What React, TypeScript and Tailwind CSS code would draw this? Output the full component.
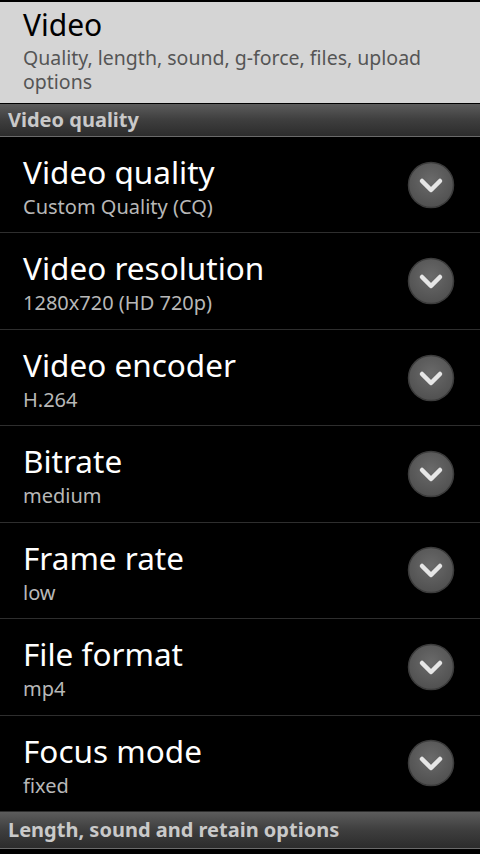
import React from "react";

const rows = [
  { title: "Video quality", value: "Custom Quality (CQ)" },
  { title: "Video resolution", value: "1280x720 (HD 720p)" },
  { title: "Video encoder", value: "H.264" },
  { title: "Bitrate", value: "medium" },
  { title: "Frame rate", value: "low" },
  { title: "File format", value: "mp4" },
  { title: "Focus mode", value: "fixed" },
];

function DropIcon() {
  return (
    <svg width="48" height="48" viewBox="0 0 48 48" className="shrink-0">
      <defs>
        <radialGradient id="g" cx="50%" cy="40%" r="60%">
          <stop offset="0%" stopColor="#6a6a6a" />
          <stop offset="100%" stopColor="#505050" />
        </radialGradient>
      </defs>
      <circle cx="24" cy="24" r="22.5" fill="url(#g)" stroke="#3c3c3c" strokeWidth="1.5" />
      <path d="M15 20 L24 29 L33 20" fill="none" stroke="#e6e6e6" strokeWidth="4.5" strokeLinecap="round" strokeLinejoin="round" />
    </svg>
  );
}

function SectionHeader({ label, h }: { label: string; h: string }) {
  return (
    <div
      className={`${h} flex items-center px-[8px] bg-gradient-to-b from-[#5c5c5c] via-[#3e3e3e] to-[#2c2c2c] border-b border-[#6a6a6a]`}
    >
      <span className="text-[20px] font-bold text-[#c9c9c9] leading-none">{label}</span>
    </div>
  );
}

export default function App() {
  return (
    <div
      className="w-[480px] h-[854px] bg-black overflow-hidden"
      style={{ fontFamily: '"Noto Sans", "Open Sans", sans-serif' }}
    >
      <div className="h-[2px]" />
      <div className="h-[101px] bg-[#d5d5d5] pl-[23px] pt-[2px]">
        <div className="text-[30px] leading-[42px] text-black">Video</div>
        <div className="text-[19.5px] leading-[24px] text-[#555555]">
          Quality, length, sound, g-force, files, upload options
        </div>
      </div>
      <div className="h-[1px]" />
      <SectionHeader label="Video quality" h="h-[33px]" />
      {rows.map((r) => (
        <div
          key={r.title}
          className="h-[96.43px] box-border border-b border-[#2e2e2e] flex items-center pl-[23px] pr-[25px]"
        >
          <div className="flex-1 self-start pt-[14px]">
            <div className="text-[31.5px] leading-[42px] text-white">{r.title}</div>
            <div className="text-[20px] leading-[28px] text-[#b8b8b8]">{r.value}</div>
          </div>
          <DropIcon />
        </div>
      ))}
      <SectionHeader label="Length, sound and retain options" h="h-[37px]" />
    </div>
  );
}
